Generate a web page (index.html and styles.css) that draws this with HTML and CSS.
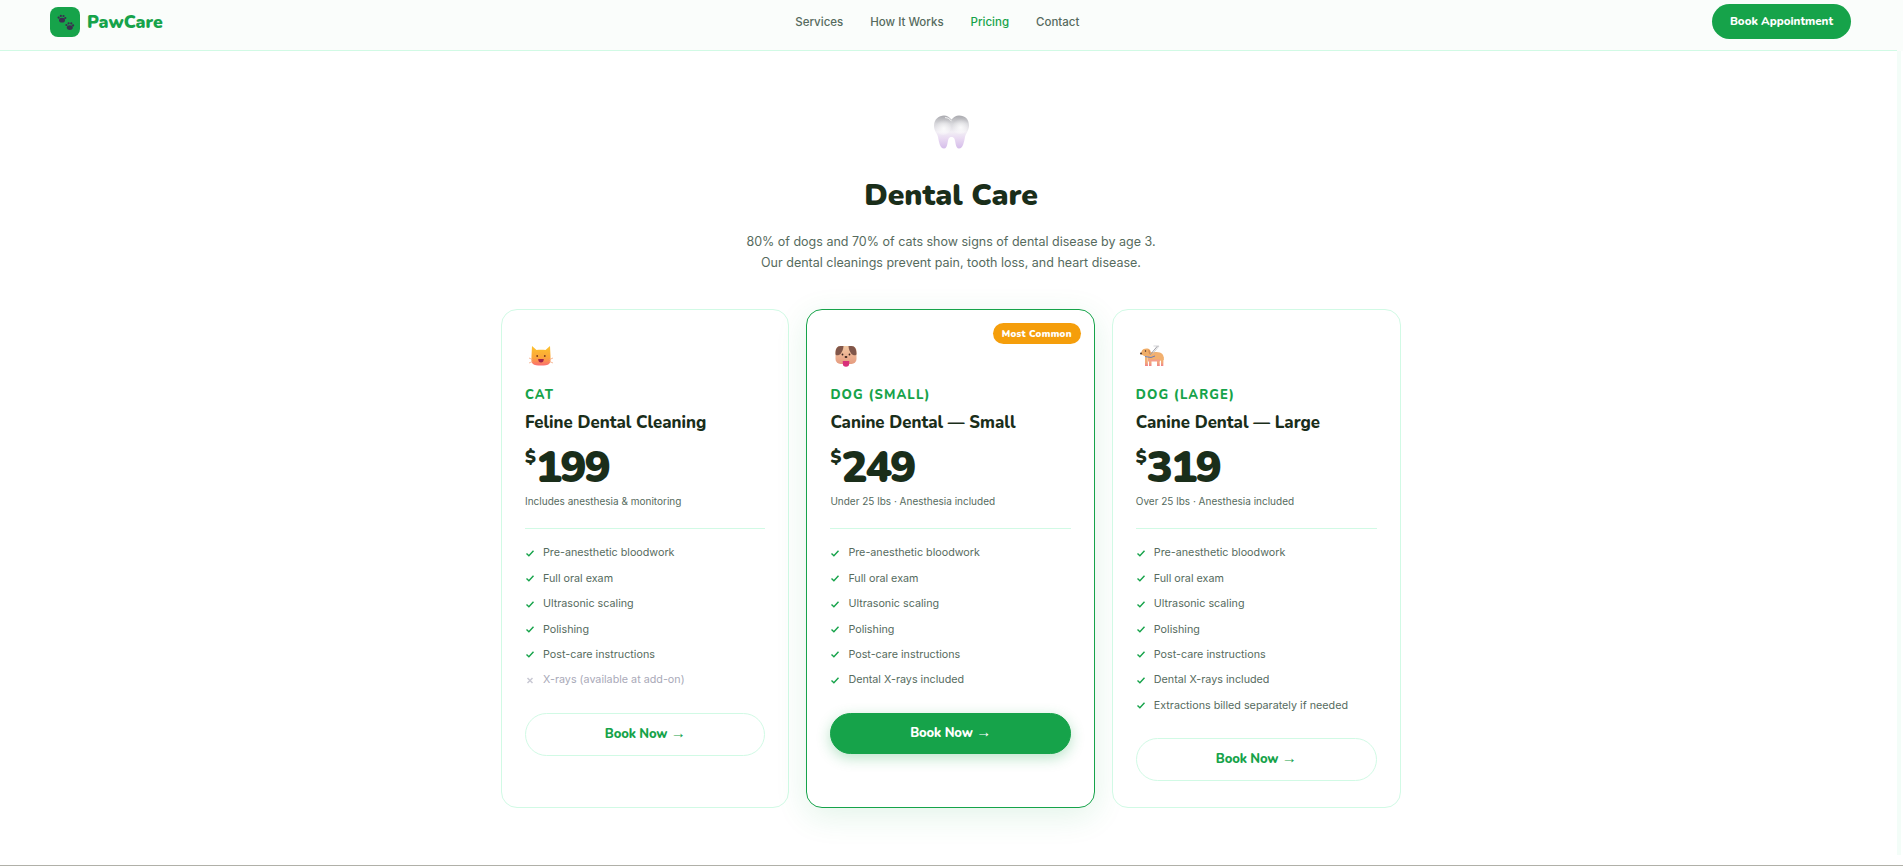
FILE: index.html
```html
<!DOCTYPE html>
<html lang="en">
<head>
<meta charset="utf-8">
<title>PawCare — Dental Care</title>
<link rel="stylesheet" href="styles.css">
</head>
<body>
<svg class="defs" width="0" height="0" aria-hidden="true">
  <defs>
    <linearGradient id="toothG" x1="0" y1="0" x2="0" y2="1"><stop offset="0" stop-color="#a9a9ae"/><stop offset=".25" stop-color="#d8d8dc"/><stop offset=".5" stop-color="#f2eff5"/><stop offset=".7" stop-color="#e9daf2"/><stop offset="1" stop-color="#d5bdea"/></linearGradient>
    <radialGradient id="toothL" cx=".55" cy=".6" r=".55"><stop offset="0" stop-color="#fff" stop-opacity=".8"/><stop offset="1" stop-color="#fff" stop-opacity="0"/></radialGradient>
    <linearGradient id="catG" x1="0" y1="0" x2="0" y2="1"><stop offset="0" stop-color="#fdc22c"/><stop offset=".6" stop-color="#fba63a"/><stop offset="1" stop-color="#fb6d72"/></linearGradient>
    <linearGradient id="dogG" x1="0" y1="0" x2="0" y2="1"><stop offset="0" stop-color="#f3c9a4"/><stop offset="1" stop-color="#e59c80"/></linearGradient>
    <linearGradient id="gdG" x1="0" y1="0" x2="0" y2="1"><stop offset="0" stop-color="#f2b871"/><stop offset=".6" stop-color="#f2a878"/><stop offset="1" stop-color="#f0828a"/></linearGradient>
    <symbol id="ok" viewBox="0 0 10 10"><path d="M1.500 5.500 3.900 7.800 8.500 2.800" fill="none" stroke="#16a34a" stroke-width="1.400"/></symbol>
    <symbol id="no" viewBox="0 0 10 10"><path d="M2.500 3 7.500 8M7.500 3 2.500 8" fill="none" stroke="#c9c9d4" stroke-width="1.500"/></symbol>
  </defs>
</svg>

<header class="nav">
  <a class="brand" href="#">
    <span class="brand-mark">
      <svg viewBox="0 0 30 30" width="30" height="30" aria-hidden="true">
        <g fill="#3a2f4f">
          <g><ellipse cx="12" cy="13.200" rx="3" ry="2.400"/><circle cx="8.600" cy="10.600" r="1.100"/><circle cx="10.800" cy="8.900" r="1.100"/><circle cx="13.500" cy="9" r="1.100"/><circle cx="15.300" cy="11" r="1.100"/></g>
          <g transform="translate(7.800 7.400)"><ellipse cx="12" cy="13.200" rx="3" ry="2.400"/><circle cx="8.600" cy="10.600" r="1.100"/><circle cx="10.800" cy="8.900" r="1.100"/><circle cx="13.500" cy="9" r="1.100"/><circle cx="15.300" cy="11" r="1.100"/></g>
        </g>
      </svg>
    </span>
    <span class="brand-name">PawCare</span>
  </a>
  <nav class="nav-links">
    <a href="#">Services</a>
    <a href="#">How It Works</a>
    <a href="#" class="active">Pricing</a>
    <a href="#">Contact</a>
  </nav>
  <a class="nav-cta" href="#">Book Appointment</a>
</header>
<div class="edge"></div>

<main class="section">
  <div class="hero-icon">
    <svg viewBox="0 0 37 34" width="37" height="34" aria-hidden="true">
      <path d="M1 11C1 4 6 .5 11 .5c3 0 5 1.500 7.500 4C21 2 23 .5 26 .5c6 0 10 3.500 10 10 0 5-3 7.500-4 11.500-1 5-2 11.500-6 11.500-4 0-3-7.500-5-10.500-1-1.500-4-1.500-5 0-2 3-1 10.500-5 10.500-4 0-5-6.500-6-11.500C4 18 1 16 1 11z" fill="url(#toothG)"/>
      <ellipse cx="10" cy="12" rx="8" ry="8" fill="url(#toothL)"/>
      <ellipse cx="27" cy="11" rx="8" ry="8" fill="url(#toothL)"/>
      <path d="M12 2.600c3 0 5 1.500 6.500 3.600" fill="none" stroke="#fff" stroke-width=".8"/>
    </svg>
  </div>
  <h1 class="title">Dental Care</h1>
  <p class="lead">80% of dogs and 70% of cats show signs of dental disease by age 3.<br>Our dental cleanings prevent pain, tooth loss, and heart disease.</p>

  <div class="plans">
    <article class="plan">
      <div class="plan-icon">
        <svg viewBox="0 0 24 24" width="24" height="24" aria-hidden="true">
          <path d="M3 2l4.500 4c2.500-.5 6.500-.5 9 0L21 2l.5 10c0 5 .5 6-1.500 8-2 2-14 2-16 0-2-2-1.500-3-1.500-8z" fill="url(#catG)"/>
          <circle cx="8.200" cy="12" r=".9" fill="#7a3b1c"/><circle cx="15.800" cy="12" r=".9" fill="#7a3b1c"/>
          <path d="M9.200 15h5.600c0 2.500-1.200 3.500-2.800 3.500S9.200 17.500 9.200 15z" fill="#a3214a"/>
          <path d="M0 14l3.500 1.500M0 19l3.500-1.500M24 14l-3.500 1.500M24 19l-3.500-1.500" stroke="#f4a983" stroke-width=".8"/>
        </svg>
      </div>
      <div class="plan-tag">CAT</div>
      <h2 class="plan-name">Feline Dental Cleaning</h2>
      <div class="price"><span class="cur">$</span><span class="amt">199</span></div>
      <p class="price-note">Includes anesthesia &amp; monitoring</p>
      <ul class="features">
        <li><svg class="mark"><use href="#ok"/></svg>Pre-anesthetic bloodwork</li>
        <li><svg class="mark"><use href="#ok"/></svg>Full oral exam</li>
        <li><svg class="mark"><use href="#ok"/></svg>Ultrasonic scaling</li>
        <li><svg class="mark"><use href="#ok"/></svg>Polishing</li>
        <li><svg class="mark"><use href="#ok"/></svg>Post-care instructions</li>
        <li class="off"><svg class="mark"><use href="#no"/></svg>X-rays (available at add-on)</li>
      </ul>
      <a class="book" href="#">Book Now <span class="arrow">→</span></a>
    </article>

    <article class="plan featured">
      <span class="badge">Most Common</span>
      <div class="plan-icon">
        <svg viewBox="0 0 24 24" width="24" height="24" aria-hidden="true">
          <rect x="1.500" y="2" width="21" height="18" rx="5" fill="url(#dogG)"/>
          <path d="M1.500 10c0-5 1.500-8 5-8h3c0 3-1.500 6-3 8-1.500 1.500-5 2-5 0zM22.500 10c0-5-1.500-8-5-8h-3c0 3 1.500 6 3 8 1.500 1.500 5 2 5 0z" fill="#80564a"/>
          <circle cx="8.500" cy="10.500" r=".9" fill="#3b2620"/><circle cx="15.500" cy="10.500" r=".9" fill="#3b2620"/>
          <ellipse cx="12" cy="13" rx="1.400" ry="1" fill="#3b2620"/>
          <path d="M8.800 17h6.400v2.500a3.200 3.200 0 0 1-6.400 0z" fill="#d8307a"/>
        </svg>
      </div>
      <div class="plan-tag">DOG (SMALL)</div>
      <h2 class="plan-name">Canine Dental — Small</h2>
      <div class="price"><span class="cur">$</span><span class="amt">249</span></div>
      <p class="price-note">Under 25 lbs · Anesthesia included</p>
      <ul class="features">
        <li><svg class="mark"><use href="#ok"/></svg>Pre-anesthetic bloodwork</li>
        <li><svg class="mark"><use href="#ok"/></svg>Full oral exam</li>
        <li><svg class="mark"><use href="#ok"/></svg>Ultrasonic scaling</li>
        <li><svg class="mark"><use href="#ok"/></svg>Polishing</li>
        <li><svg class="mark"><use href="#ok"/></svg>Post-care instructions</li>
        <li><svg class="mark"><use href="#ok"/></svg>Dental X-rays included</li>
      </ul>
      <a class="book primary" href="#">Book Now <span class="arrow">→</span></a>
    </article>

    <article class="plan">
      <div class="plan-icon">
        <svg viewBox="0 -2 24 24" width="24" height="24" aria-hidden="true">
          <path d="M5 20v-9h2.500l.5 9zM9 20v-8h2.500v8zM17 20v-8h2.500l.3 8zM21 20v-9h2.500l-.2 9z" fill="url(#gdG)"/>
          <path d="M7 7c3-1 11-1.500 14 0 2 1 3 3 2.800 7l-5 1H8z" fill="#f2b06f"/>
          <path d="M8 13.500h12v2H8z" fill="#f49d8b"/>
          <path d="M2 4.500C3 2.500 8 1.500 10 4c1.500 2 .5 6-3 6.500-2 .3-3-.8-4-1.300L.5 8z" fill="#f0ad68"/>
          <path d="M8.500 3.500c1.500.5 2.500 3 1.500 5-1-.5-2-3-1.500-5z" fill="#d98e53"/>
          <path d="M5 10.500l6 1 4-1.500" fill="none" stroke="#6b7bb5" stroke-width="1"/>
          <path d="M10 9l7.500-9" stroke="#9d9da5" stroke-width="1"/><path d="M13.500 0h5.500L13 7.500" fill="none" stroke="#c8c8cc" stroke-width=".8"/>
          <circle cx="5.500" cy="5" r=".7" fill="#3b2620"/><circle cx="1" cy="7.500" r=".9" fill="#3b2620"/>
        </svg>
      </div>
      <div class="plan-tag">DOG (LARGE)</div>
      <h2 class="plan-name">Canine Dental — Large</h2>
      <div class="price"><span class="cur">$</span><span class="amt">319</span></div>
      <p class="price-note">Over 25 lbs · Anesthesia included</p>
      <ul class="features">
        <li><svg class="mark"><use href="#ok"/></svg>Pre-anesthetic bloodwork</li>
        <li><svg class="mark"><use href="#ok"/></svg>Full oral exam</li>
        <li><svg class="mark"><use href="#ok"/></svg>Ultrasonic scaling</li>
        <li><svg class="mark"><use href="#ok"/></svg>Polishing</li>
        <li><svg class="mark"><use href="#ok"/></svg>Post-care instructions</li>
        <li><svg class="mark"><use href="#ok"/></svg>Dental X-rays included</li>
        <li><svg class="mark"><use href="#ok"/></svg>Extractions billed separately if needed</li>
      </ul>
      <a class="book" href="#">Book Now <span class="arrow">→</span></a>
    </article>
  </div>
</main>
</body>
</html>
```
FILE: styles.css
```css
* { box-sizing: border-box; }
html, body { margin: 0; padding: 0; }
body {
  position: relative;
  height: 866px;
  overflow: hidden;
  background: #fff;
  font-family: "Inter", "Liberation Sans", sans-serif;
  color: #1a2e1a;
  border-bottom: 1px solid #b0b0a8;
}
a { text-decoration: none; color: inherit; }
.defs { position: absolute; }

.nav {
  position: relative;
  height: 51px;
  padding: 0 52px 7px 50px;
  background: #fafdfb;
  display: flex;
  justify-content: space-between;
  align-items: center;
}
.nav::after {
  content: "";
  position: absolute;
  left: 0;
  right: 6px;
  bottom: 0;
  height: 1px;
  background: #d1fae5;
}
.edge {
  position: absolute;
  top: 51px;
  right: 2px;
  width: 4px;
  height: 804px;
  background: #f3fdf8;
}
.brand { display: flex; align-items: center; gap: 7px; }
.brand-mark { width: 30px; height: 30px; border-radius: 8px; background: #16a34a; display: block; }
.brand-mark svg { display: block; }
.brand-name { font-family: "Nunito", "Lato", sans-serif; font-weight: 900; font-size: 17.600px; color: #16a34a; }
.nav-links { display: flex; gap: 27px; font-size: 11.500px; font-weight: 500; color: #566b5e; }
.nav-links .active { color: #16a34a; }
.nav-cta {
  height: 35px;
  width: 139px;
  margin-bottom: 2px;
  border-radius: 18px;
  background: #16a34a;
  color: #fff;
  font-family: "Nunito", "Lato", sans-serif;
  font-weight: 800;
  font-size: 11.500px;
  display: flex;
  align-items: center;
  justify-content: center;
}

.section { padding: 64px 1px 0 0; }
.hero-icon { height: 34px; display: flex; justify-content: center; }
.title {
  margin: 25px 0 0;
  text-align: center;
  font-family: "Nunito", "Lato", sans-serif;
  font-weight: 900;
  font-size: 30px;
  line-height: 44px;
  color: #1a2e1a;
}
.lead {
  margin: 14px 0 0;
  text-align: center;
  font-size: 12.500px;
  line-height: 20.600px;
  color: #566b5e;
}

.plans {
  width: 900px;
  margin: 36px auto 0;
  display: grid;
  grid-template-columns: 288.400px 288.400px 289px;
  gap: 17px;
}
.plan {
  position: relative;
  height: 499px;
  padding: 34px 23px 0;
  border: 1px solid #d1fae5;
  border-radius: 16px;
  background: #fff;
}
.plan.featured { border-color: #16a34a; box-shadow: 0 8px 32px rgba(22, 163, 74, .12); }
.badge {
  position: absolute;
  top: 13px;
  right: 13px;
  width: 88px;
  height: 21px;
  border-radius: 11px;
  background: #f59e0b;
  color: #fff;
  font-family: "Nunito", "Lato", sans-serif;
  font-weight: 900;
  font-size: 9.600px;
  letter-spacing: .3px;
  display: flex;
  align-items: center;
  justify-content: center;
}
.plan-icon { height: 24px; padding-left: 4px; }
.plan-icon svg { display: block; }
.plan-tag {
  margin-top: 18px;
  font-family: "Nunito", "Lato", sans-serif;
  font-weight: 800;
  font-size: 13px;
  line-height: 18px;
  letter-spacing: 1.100px;
  color: #16a34a;
}
.plan-name {
  margin: 6.500px 0 0;
  font-family: "Nunito", "Lato", sans-serif;
  font-weight: 800;
  font-size: 16.800px;
  line-height: 23px;
  color: #1a2e1a;
}
.price {
  margin-top: 8.500px;
  display: flex;
  align-items: flex-start;
  font-family: "Nunito", "Lato", sans-serif;
  font-weight: 900;
  color: #1a2e1a;
  height: 51.500px;
}
.cur { font-size: 18px; line-height: 26px; margin-top: 2px; }
.amt { font-size: 44px; line-height: 52px; letter-spacing: -2px; }
.price-note { margin: 0; font-size: 10px; line-height: 15px; color: #566b5e; }
.features {
  list-style: none;
  margin: 19.500px 0 0;
  padding: 11px 0 0;
  border-top: 1px solid #d1fae5;
}
.features li {
  display: flex;
  align-items: center;
  height: 25.400px;
  font-size: 10.750px;
  color: #566b5e;
}
.features .mark { width: 10px; height: 10px; margin-right: 8px; flex: none; }
.features .off { color: #a9a9b8; }
.book {
  display: block;
  height: 43px;
  margin-top: 20px;
  border: 1px solid #d1fae5;
  border-radius: 22px;
  text-align: center;
  font-family: "Nunito", "Lato", sans-serif;
  font-weight: 800;
  font-size: 13px;
  line-height: 41px;
  letter-spacing: -.15px;
  color: #16a34a;
}
.arrow { font-family: "Liberation Sans", sans-serif; font-weight: 400; font-size: 15px; line-height: 1; }
.book.primary { height: 41px; line-height: 39px; background: #16a34a; border-color: #16a34a; color: #fff; box-shadow: 0 4px 14px rgba(22, 163, 74, .3); }
```
